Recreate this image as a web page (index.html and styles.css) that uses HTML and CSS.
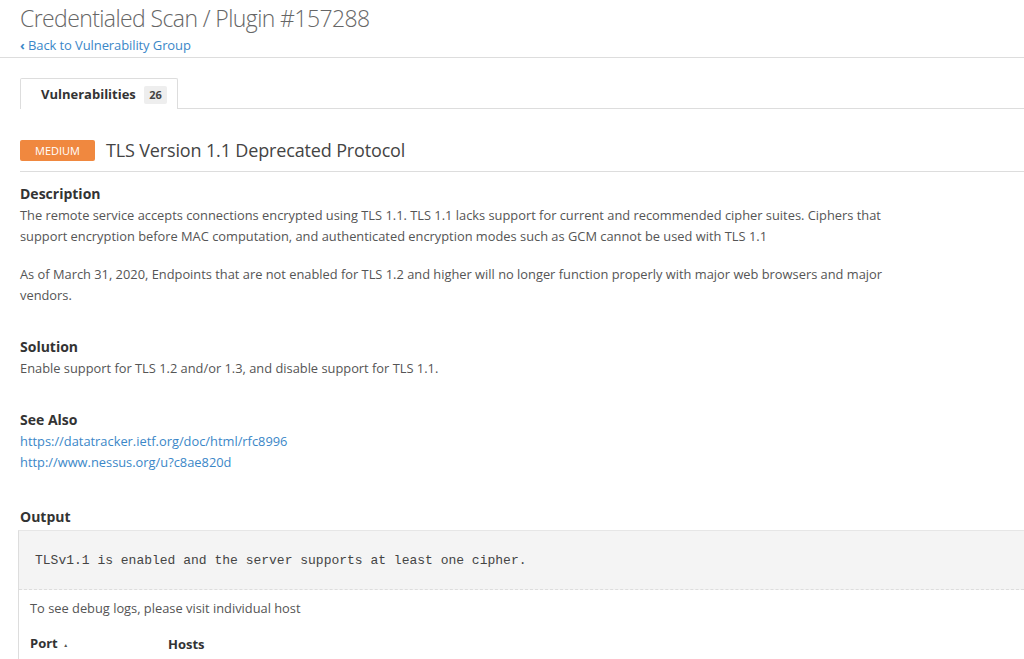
FILE: index.html
```html
<!DOCTYPE html>
<html>
<head>
  <title>Credentialed Scan / Plugin #157288</title>
  <meta name="viewport" content="width=device-width, initial-scale=1">
  <link rel="stylesheet" href="styles.css">
</head>
<body>
  <div class="page-header">
    <h1>Credentialed Scan / Plugin #157288</h1>
    <a class="back-link" href="#"><span class="chev">&lsaquo;</span> Back to Vulnerability Group</a>
  </div>

  <div class="tabs">
    <div class="tab active">Vulnerabilities <span class="count">26</span></div>
    <div class="tab-rest"></div>
  </div>

  <div class="vuln-title">
    <span class="sev sev-medium">MEDIUM</span>
    <h2>TLS Version 1.1 Deprecated Protocol</h2>
  </div>

  <div class="section first">
    <h3>Description</h3>
    <p>The remote service accepts connections encrypted using TLS 1.1. TLS 1.1 lacks support for current and recommended cipher suites. Ciphers that support encryption before MAC computation, and authenticated encryption modes such as GCM cannot be used with TLS 1.1</p>
    <p class="gap">As of March 31, 2020, Endpoints that are not enabled for TLS 1.2 and higher will no longer function properly with major web browsers and major vendors.</p>
  </div>

  <div class="section">
    <h3>Solution</h3>
    <p>Enable support for TLS 1.2 and/or 1.3, and disable support for TLS 1.1.</p>
  </div>

  <div class="section">
    <h3>See Also</h3>
    <p><a href="#">https://datatracker.ietf.org/doc/html/rfc8996</a><br>
    <a href="#">http://www.nessus.org/u?c8ae820d</a></p>
  </div>

  <div class="section output">
    <h3>Output</h3>
    <div class="output-box">
      <pre>TLSv1.1 is enabled and the server supports at least one cipher.</pre>
      <div class="output-body">
        <p>To see debug logs, please visit individual host</p>
        <table>
          <tr>
            <th class="col-port">Port <span class="sort">&#9650;</span></th>
            <th>Hosts</th>
          </tr>
        </table>
      </div>
    </div>
  </div>
</body>
</html>
```

FILE: styles.css
```css
/* base */
body {
  margin: 0;
  font-family: "Open Sans", "Liberation Sans", sans-serif;
  color: #555;
  background: #fff;
  overflow: hidden;
}

a {
  color: #3b87c8;
  text-decoration: none;
}

/* cabecalho */
.page-header {
  padding: 4px 20px 0;
  border-bottom: 1px solid #ddd;
  height: 53px;
}

h1 {
  margin: 0;
  font-size: 23px;
  font-weight: 300;
  letter-spacing: -0.6px;
  line-height: 29px;
  color: #666;
}

.back-link {
  font-size: 13px;
  line-height: 20px;
  display: inline-block;
  letter-spacing: -0.1px;
}

.chev {
  font-weight: bold;
}

/* abas */
.tabs {
  display: flex;
  margin-top: 20px;
  padding-left: 20px;
}

.tab {
  border: 1px solid #ddd;
  border-bottom: none;
  border-radius: 2px 2px 0 0;
  padding: 0 10px 0 20px;
  height: 30px;
  line-height: 30px;
  font-size: 13px;
  font-weight: 700;
  color: #333;
}

.count {
  display: inline-block;
  background: #eee;
  border-radius: 2px;
  font-size: 11px;
  line-height: 18px;
  padding: 0 5px;
  margin-left: 5px;
  color: #444;
}

.tab-rest {
  flex: 1;
  border-bottom: 1px solid #ddd;
}

/* titulo da vulnerabilidade */
.vuln-title {
  display: flex;
  align-items: center;
  margin: 29px 0 0 20px;
  padding-bottom: 9px;
  border-bottom: 1px solid #ddd;
}

.sev {
  display: inline-block;
  width: 75px;
  height: 21px;
  line-height: 21px;
  text-align: center;
  font-size: 11px;
  color: #fff;
  border-radius: 2px;
}

.sev-medium {
  background-color: #f0883f;
}

h2 {
  margin: 0 0 0 11px;
  font-size: 18px;
  font-weight: 400;
  line-height: 24px;
  color: #444;
  letter-spacing: -0.15px;
}

/* secoes */
.section {
  padding-left: 20px;
  margin-top: 30px;
}

.section.first {
  margin-top: 11px;
}

.section.output {
  margin-top: 33px;
}

h3 {
  margin: 0 0 1px;
  font-size: 14px;
  font-weight: 700;
  line-height: 21px;
  color: #333;
}

p {
  margin: 0;
  font-size: 12.85px;
  line-height: 21px;
  max-width: 880px;
}

p.gap {
  margin-top: 17px;
}

/* output */
.output-box {
  margin: 3px 0 0 -2px;
  border-left: 1px solid #ddd;
  border-top: 1px solid #e6e6e6;
}

pre {
  margin: 0;
  background: #f4f4f4;
  padding: 21px 16px 19px;
  font-family: "Liberation Mono", "Courier New", monospace;
  font-size: 13px;
  line-height: 18px;
  color: #444;
  border-bottom: 1px dashed #ddd;
}

.output-body {
  padding: 8px 11px;
}

table {
  border-collapse: collapse;
  margin-top: 14px;
}

th {
  text-align: left;
  font-size: 13px;
  color: #333;
  padding: 0;
  line-height: 20px;
}

.col-port {
  width: 138px;
}

.sort {
  font-size: 5px;
  vertical-align: middle;
  color: #555;
  margin-left: 2px;
}
```
